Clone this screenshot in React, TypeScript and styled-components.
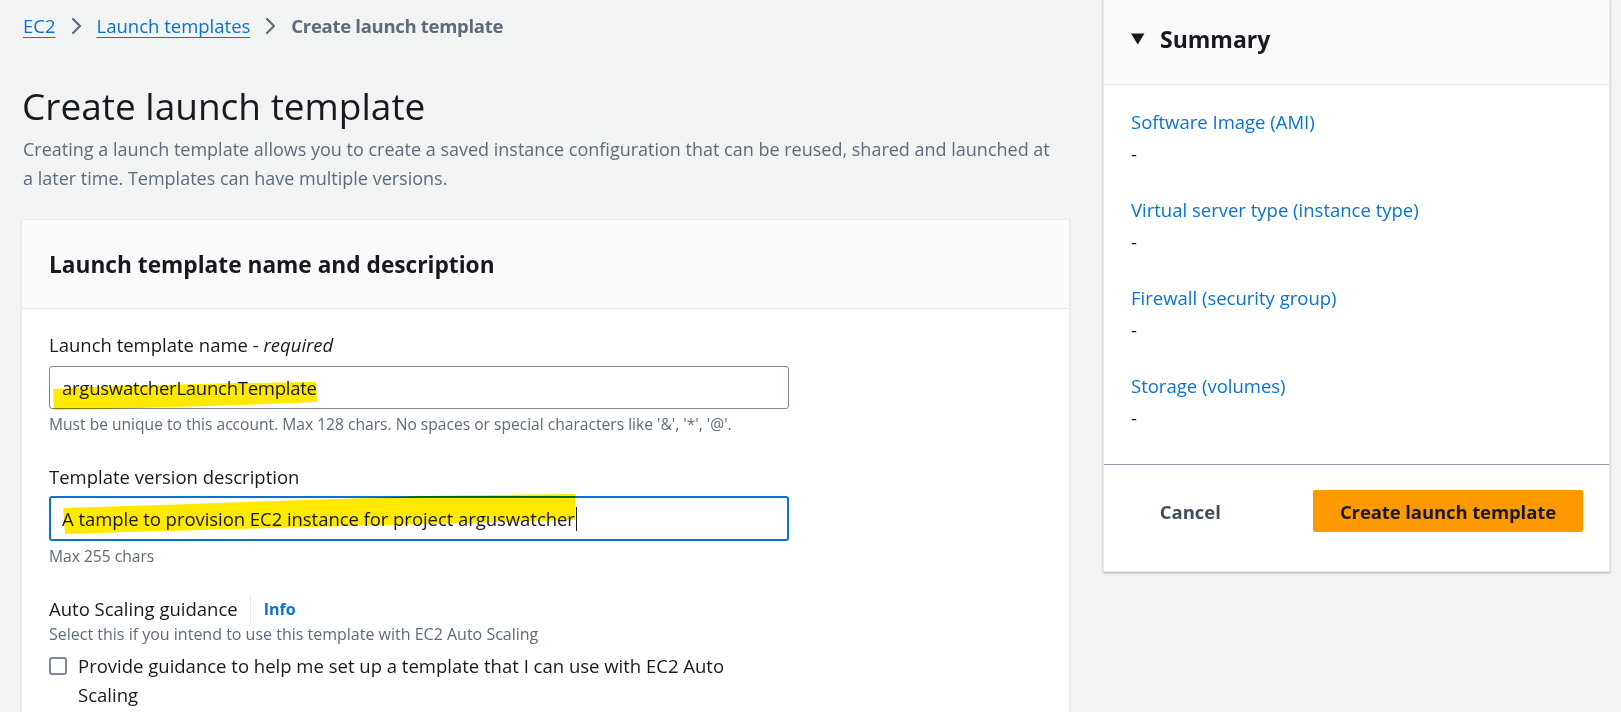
import styled, { createGlobalStyle } from 'styled-components';

const GlobalStyle = createGlobalStyle`
  html, body {
    margin: 0;
    padding: 0;
    background: #f2f3f3;
    font-family: 'Open Sans', 'Noto Sans', Arial, sans-serif;
    color: #16191f;
  }
  * {
    box-sizing: border-box;
  }
`;

const summaryItems = [
  'Software Image (AMI)',
  'Virtual server type (instance type)',
  'Firewall (security group)',
  'Storage (volumes)',
];

const Chevron = () => (
  <svg width="13" height="18" viewBox="0 0 13 18" fill="none">
    <path d="M3 2l7 7-7 7" stroke="#5f6b7a" strokeWidth="2.2" strokeLinecap="round" strokeLinejoin="round" />
  </svg>
);

const App = () => {
  return (
    <>
      <GlobalStyle />
      <Page>
        <Main>
          <Breadcrumbs>
            <Crumb href="#">EC2</Crumb>
            <Chevron />
            <Crumb href="#">Launch templates</Crumb>
            <Chevron />
            <CurrentCrumb>Create launch template</CurrentCrumb>
          </Breadcrumbs>

          <Title>Create launch template</Title>
          <Description>
            Creating a launch template allows you to create a saved instance configuration that can be reused, shared
            and launched at a later time. Templates can have multiple versions.
          </Description>

          <Card>
            <CardHeader>
              <CardTitle>Launch template name and description</CardTitle>
            </CardHeader>
            <CardBody>
              <Field>
                <Label>
                  Launch template name - <em>required</em>
                </Label>
                <InputBox>
                  <Marker viewBox="0 0 266 30" $left={2} $top={14} $width={266} $height={30} preserveAspectRatio="none">
                    <path d="M1 8 C60 5 170 2 264 1 L265 21 C200 24 90 27 2 29 Z" fill="#ffe900" />
                  </Marker>
                  <InputText $spacing={-0.25}>arguswatcherLaunchTemplate</InputText>
                </InputBox>
                <Constraint>
                  Must be unique to this account. Max 128 chars. No spaces or special characters like '&amp;', '*', '@'.
                </Constraint>
              </Field>

              <Field>
                <Label>Template version description</Label>
                <InputBox $focused>
                  <Marker viewBox="0 0 516 46" $left={10} $top={-8} $width={516} $height={46} preserveAspectRatio="none">
                    <path d="M2 18 C120 14 250 10 360 6 L514 4 L514 30 C380 34 200 38 4 44 Z" fill="#ffe900" />
                  </Marker>
                  <InputText $spacing={-0.05}>
                    A tample to provision EC2 instance for project arguswatcher
                    <Caret />
                  </InputText>
                </InputBox>
                <Constraint>Max 255 chars</Constraint>
              </Field>

              <Field>
                <LabelRow>
                  <Label>Auto Scaling guidance</Label>
                  <InfoLink href="#">Info</InfoLink>
                </LabelRow>
                <Hint>Select this if you intend to use this template with EC2 Auto Scaling</Hint>
                <CheckRow>
                  <CheckBox />
                  <CheckLabel>Provide guidance to help me set up a template that I can use with EC2 Auto Scaling</CheckLabel>
                </CheckRow>
              </Field>
            </CardBody>
          </Card>
        </Main>

        <Aside>
          <SummaryHeader>
            <svg width="14" height="12" viewBox="0 0 14 12">
              <path d="M0 0.5h13.5L6.75 11.5z" fill="#16191f" />
            </svg>
            <SummaryTitle>Summary</SummaryTitle>
          </SummaryHeader>
          <SummaryList>
            {summaryItems.map((item) => (
              <SummaryItem key={item}>
                <SummaryLabel href="#">{item}</SummaryLabel>
                <SummaryValue>-</SummaryValue>
              </SummaryItem>
            ))}
          </SummaryList>
          <Actions>
            <CancelButton>Cancel</CancelButton>
            <PrimaryButton>Create launch template</PrimaryButton>
          </Actions>
        </Aside>
      </Page>
    </>
  );
};

const Page = styled.div`
  display: flex;
  align-items: flex-start;
  gap: 33px;
  width: 1621px;
  height: 712px;
  overflow: hidden;
  padding: 0 13px 0 21px;
`;

const Main = styled.main`
  display: flex;
  flex-direction: column;
  width: 1049px;
  flex-shrink: 0;
`;

const Breadcrumbs = styled.nav`
  display: flex;
  align-items: center;
  gap: 14px;
  height: 51px;
  padding-left: 2px;
  font-size: 18.5px;
`;

const Crumb = styled.a`
  color: #0972d3;
  text-decoration: underline;
  text-underline-offset: 4px;
  text-decoration-thickness: 1px;
`;

const CurrentCrumb = styled.span`
  color: #5f6b7a;
  font-weight: 700;
  letter-spacing: -0.3px;
`;

const Title = styled.h1`
  margin: 29px 0 0;
  padding-left: 1px;
  font-size: 37px;
  font-weight: 400;
  line-height: 52px;
  color: #16191f;
`;

const Description = styled.p`
  width: 1038px;
  margin: 3px 0 0;
  padding-left: 2px;
  font-size: 18px;
  line-height: 29px;
  color: #5f6b7a;
`;

const Card = styled.section`
  margin-top: 26px;
  background: #fff;
  border: 1px solid #e9ebed;
  box-shadow: 0 1px 1px rgba(0, 28, 36, 0.2);
`;

const CardHeader = styled.div`
  display: flex;
  align-items: center;
  height: 89px;
  padding: 0 27px;
  background: #fafafa;
  border-bottom: 1px solid #e4e7e9;
`;

const CardTitle = styled.h2`
  margin: 0;
  font-size: 22.7px;
  font-weight: 700;
  color: #16191f;
`;

const CardBody = styled.div`
  display: flex;
  flex-direction: column;
  gap: 28px;
  padding: 22px 27px 20px;
`;

const Field = styled.div`
  display: flex;
  flex-direction: column;
  width: 740px;
`;

const Label = styled.label`
  font-size: 18.5px;
  line-height: 28px;
  color: #16191f;

  em {
    font-style: italic;
  }
`;

const LabelRow = styled.div`
  display: flex;
  align-items: center;
  gap: 13px;

  ${Label} {
    padding-right: 12px;
    border-right: 1px solid #e9ebed;
  }
`;

const InfoLink = styled.a`
  font-size: 16px;
  font-weight: 700;
  color: #0972d3;
  text-decoration: none;
`;

const InputBox = styled.div<{ $focused?: boolean }>`
  position: relative;
  display: flex;
  align-items: center;
  width: 740px;
  height: ${({ $focused }) => ($focused ? '45px' : '43px')};
  margin-top: ${({ $focused }) => ($focused ? '5px' : '7px')};
  padding: 0 ${({ $focused }) => ($focused ? '11px' : '12px')};
  background: #fff;
  border: ${({ $focused }) => ($focused ? '2px solid #0972d3' : '1px solid #7d8998')};
  border-radius: 3px;
`;

const Marker = styled.svg<{ $left: number; $top: number; $width: number; $height: number }>`
  position: absolute;
  left: ${({ $left }) => $left}px;
  top: ${({ $top }) => $top}px;
  width: ${({ $width }) => $width}px;
  height: ${({ $height }) => $height}px;
  mix-blend-mode: multiply;
  pointer-events: none;
`;

const InputText = styled.span<{ $spacing: number }>`
  position: relative;
  display: flex;
  align-items: center;
  font-size: 18.5px;
  letter-spacing: ${({ $spacing }) => $spacing}px;
  color: #16191f;
  mix-blend-mode: multiply;
`;

const Caret = styled.span`
  display: inline-block;
  width: 1px;
  height: 24px;
  margin-left: 1px;
  background: #16191f;
`;

const Constraint = styled.div`
  margin-top: 4px;
  font-size: 15.6px;
  line-height: 22px;
  color: #5f6b7a;
`;

const Hint = styled.div`
  font-size: 16px;
  line-height: 22px;
  color: #5f6b7a;
`;

const CheckRow = styled.div`
  display: flex;
  align-items: flex-start;
  gap: 11px;
  margin-top: 10px;
`;

const CheckBox = styled.span`
  flex-shrink: 0;
  width: 18px;
  height: 18px;
  margin-top: 2px;
  border: 2px solid #7d8998;
  border-radius: 3px;
  background: #fff;
`;

const CheckLabel = styled.span`
  width: 700px;
  font-size: 18.5px;
  line-height: 29px;
  margin-top: -4px;
  color: #16191f;
`;

const Aside = styled.aside`
  display: flex;
  flex-direction: column;
  width: 507px;
  flex-shrink: 0;
  background: #fff;
  border: 1px solid #e9ebed;
  border-top: none;
  box-shadow: 0 1px 2px rgba(0, 28, 36, 0.35);
`;

const SummaryHeader = styled.div`
  display: flex;
  align-items: center;
  gap: 15px;
  height: 85px;
  padding: 0 27px 6px;
  background: #fafafa;
  border-bottom: 1px solid #e4e7e9;
`;

const SummaryTitle = styled.h2`
  margin: 0;
  font-size: 23px;
  font-weight: 700;
  color: #16191f;
`;

const SummaryList = styled.div`
  display: flex;
  flex-direction: column;
  gap: 28px;
  padding: 23px 27px 32px;
  border-bottom: 1px solid #8d99a8;
`;

const SummaryItem = styled.div`
  display: flex;
  flex-direction: column;
  gap: 4px;
`;

const SummaryLabel = styled.a`
  font-size: 18.5px;
  line-height: 28px;
  color: #0972d3;
  text-decoration: none;
`;

const SummaryValue = styled.span`
  font-size: 18.5px;
  line-height: 28px;
  color: #16191f;
`;

const Actions = styled.div`
  display: flex;
  align-items: center;
  justify-content: flex-end;
  gap: 92px;
  padding: 25px 26px 39px;
`;

const CancelButton = styled.button`
  padding: 0;
  border: none;
  background: transparent;
  font-family: inherit;
  font-size: 18.5px;
  font-weight: 700;
  color: #414d5c;
`;

const PrimaryButton = styled.button`
  height: 42px;
  padding: 0 27px;
  border: none;
  border-radius: 2px;
  background: #ff9900;
  font-family: inherit;
  font-size: 18.5px;
  font-weight: 700;
  letter-spacing: -0.1px;
  color: #16191f;
`;

export default App;
